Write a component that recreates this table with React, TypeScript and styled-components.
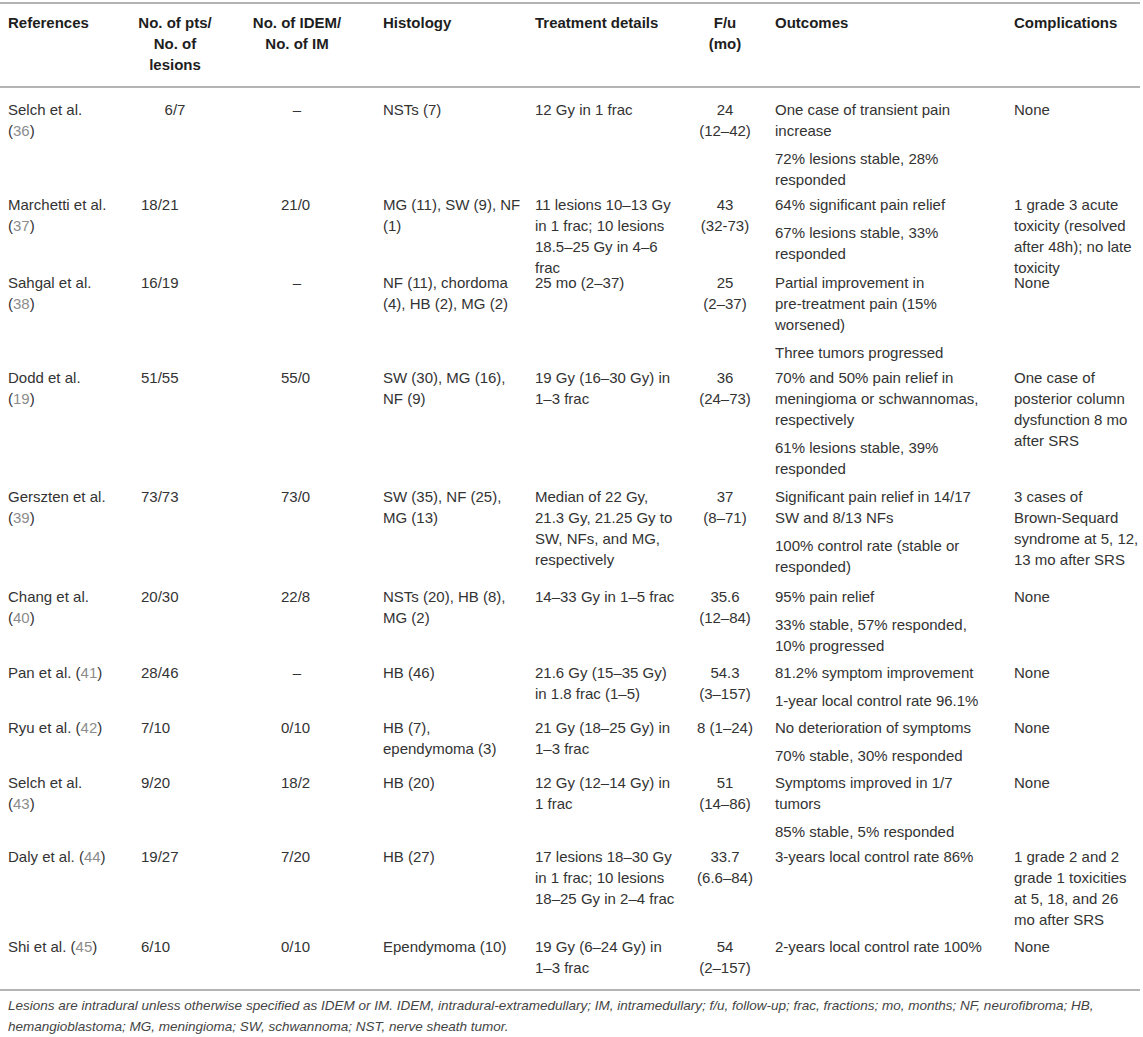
import React from "react";
import styled, { createGlobalStyle } from "styled-components";

const GlobalStyle = createGlobalStyle`
  body {
    margin: 0;
    background: #ffffff;
    font-family: "Liberation Sans", Arial, Helvetica, sans-serif;
    color: #333333;
  }
`;

type Align = "left" | "center";

interface ICol {
  align: Align;
  pad: number;
}

// column layout: 8 columns, widths sum to the table width
const COLS: ICol[] = [
  { align: "left", pad: 8 },
  { align: "center", pad: 0 },
  { align: "center", pad: 0 },
  { align: "left", pad: 11 },
  { align: "left", pad: 0 },
  { align: "center", pad: 0 },
  { align: "left", pad: 15 },
  { align: "left", pad: 0 },
];

interface IRow {
  author: string;
  refNo: string;
  inline?: boolean;
  pts: string;
  ptsCentered?: boolean;
  idem: string;
  histology: string;
  treatment: string;
  fu: string;
  outcomes: string[];
  complications: string;
  height: number;
}

const rows: IRow[] = [
  {
    author: "Selch et al.",
    refNo: "36",
    pts: "6/7",
    ptsCentered: true,
    idem: "–",
    histology: "NSTs (7)",
    treatment: "12 Gy in 1 frac",
    fu: "24\n(12–42)",
    outcomes: [
      "One case of transient pain\nincrease",
      "72% lesions stable, 28%\nresponded",
    ],
    complications: "None",
    height: 95,
  },
  {
    author: "Marchetti et al.",
    refNo: "37",
    pts: "18/21",
    idem: "21/0",
    histology: "MG (11), SW (9), NF\n(1)",
    treatment: "11 lesions 10–13 Gy\nin 1 frac; 10 lesions\n18.5–25 Gy in 4–6\nfrac",
    fu: "43\n(32-73)",
    outcomes: ["64% significant pain relief", "67% lesions stable, 33%\nresponded"],
    complications: "1 grade 3 acute\ntoxicity (resolved\nafter 48h); no late\ntoxicity",
    height: 78,
  },
  {
    author: "Sahgal et al.",
    refNo: "38",
    pts: "16/19",
    idem: "–",
    histology: "NF (11), chordoma\n(4), HB (2), MG (2)",
    treatment: "25 mo (2–37)",
    fu: "25\n(2–37)",
    outcomes: [
      "Partial improvement in\npre-treatment pain (15%\nworsened)",
      "Three tumors progressed",
    ],
    complications: "None",
    height: 95,
  },
  {
    author: "Dodd et al.",
    refNo: "19",
    pts: "51/55",
    idem: "55/0",
    histology: "SW (30), MG (16),\nNF (9)",
    treatment: "19 Gy (16–30 Gy) in\n1–3 frac",
    fu: "36\n(24–73)",
    outcomes: [
      "70% and 50% pain relief in\nmeningioma or schwannomas,\nrespectively",
      "61% lesions stable, 39%\nresponded",
    ],
    complications: "One case of\nposterior column\ndysfunction 8 mo\nafter SRS",
    height: 119,
  },
  {
    author: "Gerszten et al.",
    refNo: "39",
    pts: "73/73",
    idem: "73/0",
    histology: "SW (35), NF (25),\nMG (13)",
    treatment: "Median of 22 Gy,\n21.3 Gy, 21.25 Gy to\nSW, NFs, and MG,\nrespectively",
    fu: "37\n(8–71)",
    outcomes: [
      "Significant pain relief in 14/17\nSW and 8/13 NFs",
      "100% control rate (stable or\nresponded)",
    ],
    complications: "3 cases of\nBrown-Sequard\nsyndrome at 5, 12,\n13 mo after SRS",
    height: 100,
  },
  {
    author: "Chang et al.",
    refNo: "40",
    pts: "20/30",
    idem: "22/8",
    histology: "NSTs (20), HB (8),\nMG (2)",
    treatment: "14–33 Gy in 1–5 frac",
    fu: "35.6\n(12–84)",
    outcomes: ["95% pain relief", "33% stable, 57% responded,\n10% progressed"],
    complications: "None",
    height: 76,
  },
  {
    author: "Pan et al.",
    refNo: "41",
    inline: true,
    pts: "28/46",
    idem: "–",
    histology: "HB (46)",
    treatment: "21.6 Gy (15–35 Gy)\nin 1.8 frac (1–5)",
    fu: "54.3\n(3–157)",
    outcomes: ["81.2% symptom improvement", "1-year local control rate 96.1%"],
    complications: "None",
    height: 55,
  },
  {
    author: "Ryu et al.",
    refNo: "42",
    inline: true,
    pts: "7/10",
    idem: "0/10",
    histology: "HB (7),\nependymoma (3)",
    treatment: "21 Gy (18–25 Gy) in\n1–3 frac",
    fu: "8 (1–24)",
    outcomes: ["No deterioration of symptoms", "70% stable, 30% responded"],
    complications: "None",
    height: 55,
  },
  {
    author: "Selch et al.",
    refNo: "43",
    pts: "9/20",
    idem: "18/2",
    histology: "HB (20)",
    treatment: "12 Gy (12–14 Gy) in\n1 frac",
    fu: "51\n(14–86)",
    outcomes: ["Symptoms improved in 1/7\ntumors", "85% stable, 5% responded"],
    complications: "None",
    height: 74,
  },
  {
    author: "Daly et al.",
    refNo: "44",
    inline: true,
    pts: "19/27",
    idem: "7/20",
    histology: "HB (27)",
    treatment: "17 lesions 18–30 Gy\nin 1 frac; 10 lesions\n18–25 Gy in 2–4 frac",
    fu: "33.7\n(6.6–84)",
    outcomes: ["3-years local control rate 86%"],
    complications: "1 grade 2 and 2\ngrade 1 toxicities\nat 5, 18, and 26\nmo after SRS",
    height: 90,
  },
  {
    author: "Shi et al.",
    refNo: "45",
    inline: true,
    pts: "6/10",
    idem: "0/10",
    histology: "Ependymoma (10)",
    treatment: "19 Gy (6–24 Gy) in\n1–3 frac",
    fu: "54\n(2–157)",
    outcomes: ["2-years local control rate 100%"],
    complications: "None",
    height: 64,
  },
];

const headers = [
  "References",
  "No. of pts/\nNo. of\nlesions",
  "No. of IDEM/\nNo. of IM",
  "Histology",
  "Treatment details",
  "F/u\n(mo)",
  "Outcomes",
  "Complications",
];

const Cell: React.FC<{
  col: number;
  align?: Align;
  pad?: number;
  children?: React.ReactNode;
}> = ({ col, align, pad, children }) => (
  <StyledCell
    $align={align ?? COLS[col].align}
    $pad={pad ?? COLS[col].pad}
  >
    {children}
  </StyledCell>
);

export default function App() {
  return (
    <>
      <GlobalStyle />
      <Page>
        <Table>
          <HeaderRow>
            {headers.map((h, i) => (
              <Cell key={i} col={i}>
                {h}
              </Cell>
            ))}
          </HeaderRow>
          <Body>
            {rows.map((r, i) => (
              <BodyRow key={i} $h={r.height}>
                <Cell col={0}>
                  {r.author}
                  {r.inline ? " " : "\n"}(<RefNo>{r.refNo}</RefNo>)
                </Cell>
                {r.ptsCentered ? (
                  <Cell col={1}>{r.pts}</Cell>
                ) : (
                  <Cell col={1} align="left" pad={13}>
                    {r.pts}
                  </Cell>
                )}
                {r.idem === "–" ? (
                  <Cell col={2}>{r.idem}</Cell>
                ) : (
                  <Cell col={2} align="left" pad={59}>
                    {r.idem}
                  </Cell>
                )}
                <Cell col={3}>{r.histology}</Cell>
                <Cell col={4}>{r.treatment}</Cell>
                <Cell col={5}>{r.fu}</Cell>
                <Cell col={6}>
                  {r.outcomes.map((o, j) => (
                    <Para key={j}>{o}</Para>
                  ))}
                </Cell>
                <Cell col={7}>{r.complications}</Cell>
              </BodyRow>
            ))}
          </Body>
        </Table>
        <Footnote>
          Lesions are intradural unless otherwise specified as IDEM or IM. IDEM,
          intradural-extramedullary; IM, intramedullary; f/u, follow-up; frac,
          fractions; mo, months; NF, neurofibroma; HB,{"\n"}hemangioblastoma;
          MG, meningioma; SW, schwannoma; NST, nerve sheath tumor.
        </Footnote>
      </Page>
    </>
  );
}

const Page = styled.div`
  width: 1140px;
  padding-top: 2px;
`;

const Table = styled.div`
  border-top: 2px solid #b4b4b4;
  border-bottom: 2px solid #b4b4b4;
`;

const gridCols = "128px 94px 150px 163px 155px 70px 254px 126px";

const HeaderRow = styled.div`
  display: grid;
  grid-template-columns: ${gridCols};
  padding: 8px 0 11px;
  border-bottom: 2px solid #b4b4b4;
  font-weight: bold;
  color: #1e1e1e;
`;

const Body = styled.div`
  display: flex;
  flex-direction: column;
`;

const BodyRow = styled.div<{ $h: number }>`
  display: grid;
  grid-template-columns: ${gridCols};
  height: ${(p) => p.$h}px;
  padding-top: 11px;
  box-sizing: border-box;
  color: #333333;
`;

const StyledCell = styled.div<{ $align: Align; $pad: number }>`
  font-size: 15px;
  line-height: 21px;
  white-space: pre-line;
  text-align: ${(p) => p.$align};
  padding-left: ${(p) => p.$pad}px;
`;

const Para = styled.p`
  margin: 0;

  & + & {
    margin-top: 7px;
  }
`;

const RefNo = styled.span`
  color: #8c8c8c;
`;

const Footnote = styled.p`
  margin: 4px 0 0;
  padding-left: 8px;
  font-size: 13.5px;
  line-height: 21px;
  font-style: italic;
  color: #444444;
  white-space: pre-line;
`;
